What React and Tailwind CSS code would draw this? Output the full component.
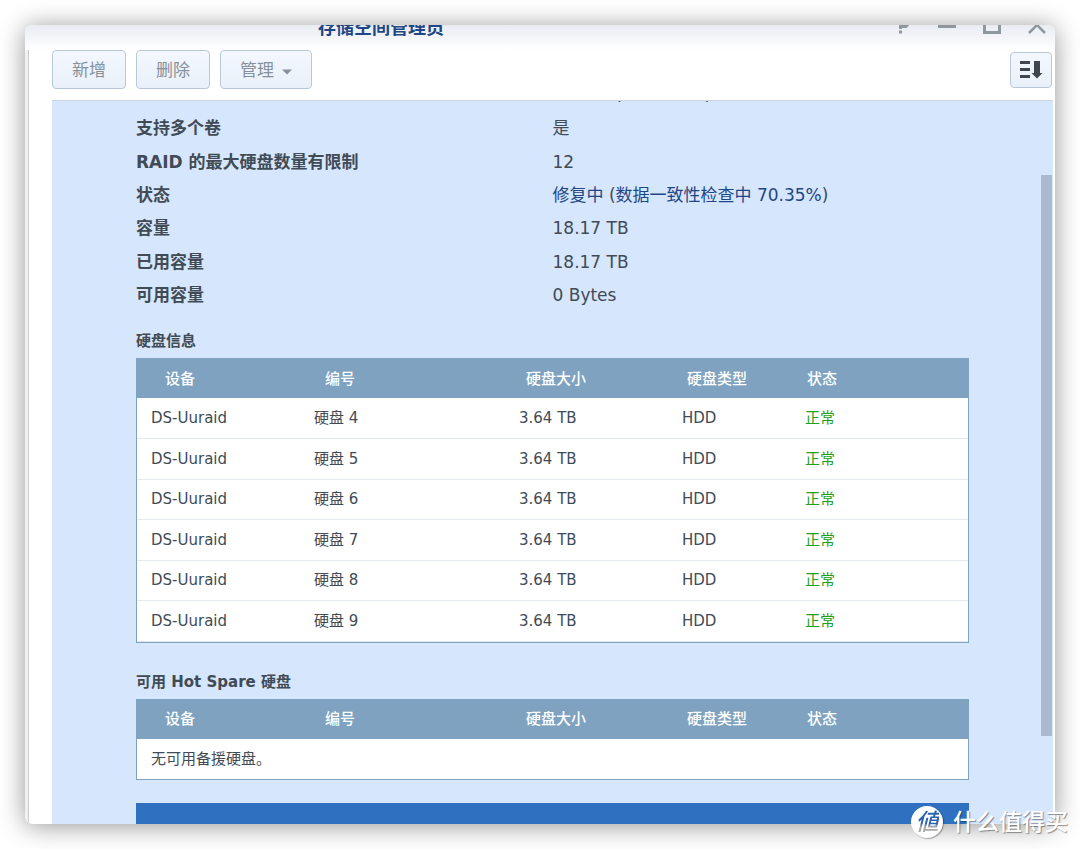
import React from "react";

const columns = [
  { label: "设备", width: "w-[163px]", pad: "pl-7" },
  { label: "编号", width: "w-[205px]", pad: "pl-[25px]" },
  { label: "硬盘大小", width: "w-[163px]", pad: "pl-[21px]" },
  { label: "硬盘类型", width: "w-[123px]", pad: "pl-[19px]" },
  { label: "状态", width: "", pad: "pl-4" },
];

const disks = [4, 5, 6, 7, 8, 9].map((n) => ({
  id: n,
  device: "DS-Uuraid",
  name: `硬盘 ${n}`,
  size: "3.64 TB",
  type: "HDD",
  status: "正常",
}));

const details = [
  {
    label: "RAID",
    value: (
      <>
        RAID 5 <span className="font-['Liberation_Sans',sans-serif]">(</span>
        有数据保护
        <span className="font-['Liberation_Sans',sans-serif]">)</span>
      </>
    ),
  },
  { label: "支持多个卷", value: "是" },
  { label: "RAID 的最大硬盘数量有限制", value: "12" },
  {
    label: "状态",
    value: (
      <>
        <span className="text-[#1f4785]">修复中</span> (
        <span className="text-[#1f4785]">数据一致性检查中 70.35%</span>)
      </>
    ),
  },
  { label: "容量", value: "18.17 TB" },
  { label: "已用容量", value: "18.17 TB" },
  { label: "可用容量", value: "0 Bytes" },
];

function WindowButton({ label, children }) {
  return (
    <button type="button" aria-label={label} className="w-5 h-5 text-[#8f979f]">
      <svg viewBox="0 0 20 20" className="w-5 h-5" fill="none" stroke="currentColor">
        {children}
      </svg>
    </button>
  );
}

function ToolbarButton({ children }) {
  return (
    <button
      type="button"
      className="h-[39px] px-[19px] flex items-center gap-2 rounded border border-[#b8c8d8] bg-gradient-to-b from-[#f3f8ff] to-[#eaf0f9] text-[17px] leading-6 text-[#87919c]"
    >
      {children}
    </button>
  );
}

function DiskTable({ title, rows, empty }) {
  return (
    <section>
      <h3 className="mb-[6px] text-[15px] leading-[22px] font-bold">{title}</h3>
      <div className="border border-[#7ea2c0] bg-white">
        <table className="w-full table-fixed text-[15px] leading-[22px]">
          <thead>
            <tr className="h-[39px] bg-[#7ea2c0] text-white">
              {columns.map((col) => (
                <th
                  key={col.label}
                  scope="col"
                  className={`${col.width} ${col.pad} text-left font-medium`}
                >
                  {col.label}
                </th>
              ))}
            </tr>
          </thead>
          <tbody>
            {rows.map((disk) => (
              <tr key={disk.id} className="odd:h-10 even:h-[41px] border-b border-[#e3e9f0]">
                <td className="pl-[14px]">{disk.device}</td>
                <td className="pl-[14px]">{disk.name}</td>
                <td className="pl-[14px]">{disk.size}</td>
                <td className="pl-[14px]">{disk.type}</td>
                <td className="pl-[14px] text-[#22a01c]">{disk.status}</td>
              </tr>
            ))}
            {rows.length === 0 && (
              <tr className="h-10">
                <td colSpan={columns.length} className="pl-[14px]">
                  {empty}
                </td>
              </tr>
            )}
          </tbody>
        </table>
      </div>
    </section>
  );
}

export default function App() {
  return (
    <div className="relative h-screen p-[25px] overflow-hidden bg-white font-['DejaVu_Sans','Noto_Sans_CJK_SC',sans-serif] text-[#414b55]">
      <div className="h-full flex flex-col rounded-lg overflow-hidden bg-white shadow-[0_2px_26px_rgba(0,0,0,0.42)]">
        {/* Title bar, upper part is cut off by the window edge */}
        <header className="h-[25px] shrink-0 flex items-end overflow-hidden bg-gradient-to-b from-[#e8ecf2] to-white">
          <div className="h-12 w-full shrink-0 flex items-center justify-between pl-[293px] pr-2">
            <h1 className="text-[18px] leading-6 font-bold text-[#1f4785] pt-1">存储空间管理员</h1>
            <div className="flex gap-[25px]">
              <WindowButton label="帮助">
                <path d="M8 3h8v5l-2 2.500H8.500V13M8.500 14.500v3" strokeWidth="3" />
              </WindowButton>
              <WindowButton label="最小化">
                <path d="M1 10.500h18" strokeWidth="3" />
              </WindowButton>
              <WindowButton label="最大化">
                <path d="M2.500 3h15v13.500h-15z" strokeWidth="3" />
              </WindowButton>
              <WindowButton label="关闭">
                <path d="M2 1l16 16M18 1L2 17" strokeWidth="2.5" />
              </WindowButton>
            </div>
          </div>
        </header>

        <div className="flex-1 min-h-0 flex">
          <div className="w-1 shrink-0 border-r border-[#cccccc] bg-[#f0f0f0]" />

          <main className="flex-1 min-w-0 flex flex-col pl-[23px] pr-[2px]">
            {/* Toolbar */}
            <div className="h-[51px] shrink-0 flex items-start justify-between border-b border-[#cbd5e2]">
              <div className="flex gap-[10px]">
                <ToolbarButton>新增</ToolbarButton>
                <ToolbarButton>删除</ToolbarButton>
                <ToolbarButton>
                  管理
                  <svg viewBox="0 0 10 6" className="w-[10px] h-[6px] mt-1" fill="#87919c">
                    <path d="M0 .5h10L5 5.5z" />
                  </svg>
                </ToolbarButton>
              </div>
              <button
                type="button"
                aria-label="排序"
                className="w-[42px] h-9 mt-[2px] mr-px flex items-center justify-center rounded border border-[#b8c8d8] bg-gradient-to-b from-[#f3f8ff] to-[#eaf0f9]"
              >
                <svg viewBox="0 0 24 20" className="w-6 h-5" fill="#3f4650">
                  <path d="M1 1h10v3H1zM1 8h10v3H1zM1 15h10v3H1zM15 1h6v12h2.500L18 18.500 12.500 13H15z" />
                </svg>
              </button>
            </div>

            {/* Scrolled content */}
            <div className="flex-1 min-h-0 flex overflow-hidden bg-[#d6e6fc]">
              <div className="flex-1 min-w-0 pl-[84px] pr-[72px] -mt-[23px]">
                <dl className="h-[234px] grid auto-rows-fr text-[17px] leading-6">
                  {details.map((item) => (
                    <div key={item.label} className="grid grid-cols-2 items-center first:pb-[2px]">
                      <dt className="font-bold">{item.label}</dt>
                      <dd>{item.value}</dd>
                    </div>
                  ))}
                </dl>

                <div className="pt-[18px] flex flex-col gap-7">
                  <DiskTable title="硬盘信息" rows={disks} />
                  <DiskTable title="可用 Hot Spare 硬盘" rows={[]} empty="无可用备援硬盘。" />
                </div>

                <div className="h-10 mt-[23px] bg-[#3070c1]" />
              </div>
              <div className="w-[11px] shrink-0 mr-px pt-[74px]">
                <div className="h-[561px] bg-[#aab9ce]" />
              </div>
            </div>
          </main>
        </div>
      </div>

      {/* Watermark */}
      <div className="absolute right-3 bottom-[11px] flex items-center gap-[10px] text-white">
        <span className="w-8 h-8 flex items-center justify-center rounded-full bg-white shadow-[1px_1px_1px_rgba(0,0,0,0.3)]">
          <span className="bg-gradient-to-b from-[#2b62ab] from-55% to-[#a8a8a8] to-65% bg-clip-text text-transparent text-[23px] leading-8 font-medium italic">
            値
          </span>
        </span>
        <span className="text-[23px] leading-8 font-medium [text-shadow:1px_1px_1px_rgba(0,0,0,0.4)]">
          什么值得买
        </span>
      </div>
    </div>
  );
}
